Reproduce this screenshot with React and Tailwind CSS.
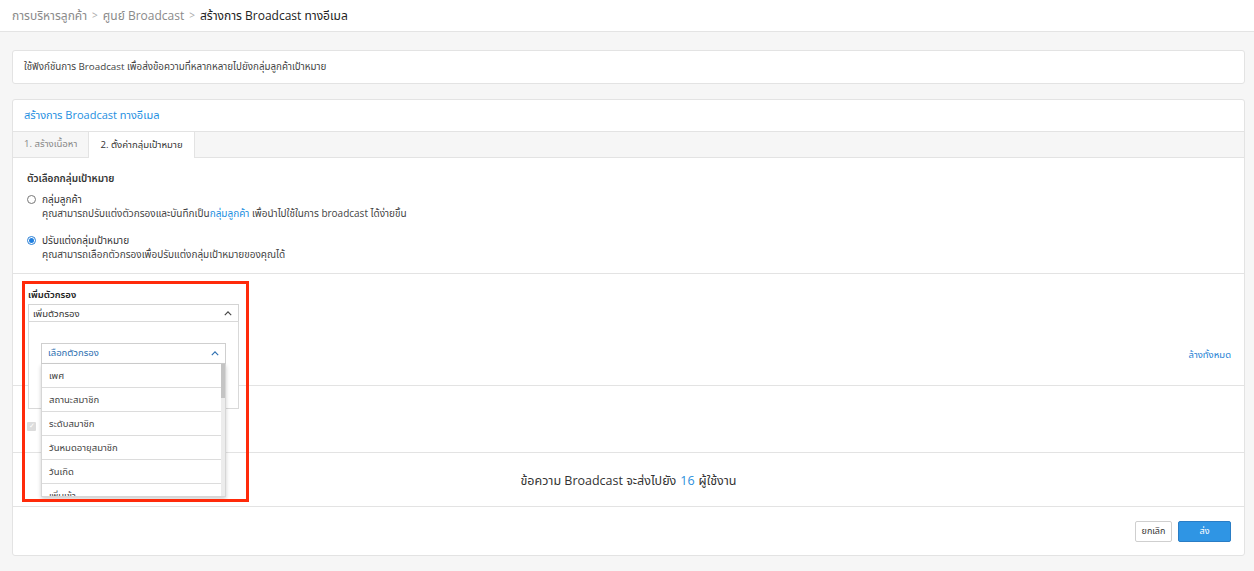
import React from 'react';

const FONT = { fontFamily: '"Open Sans", "Noto Sans", "Noto Sans Thai", "Liberation Sans", sans-serif' };

const ChevronUp = ({ className }) => (
  <svg viewBox="0 0 10 6" className={className} fill="none" stroke="currentColor" strokeWidth="1.4">
    <path d="M1 5l4-4 4 4" />
  </svg>
);

const filterItems = ['เพศ', 'สถานะสมาชิก', 'ระดับสมาชิก', 'วันหมดอายุสมาชิก', 'วันเกิด', 'เพิ่มเข้า'];

const Radio = ({ checked }) => (
  <span
    className={`mt-[3px] flex h-[9px] w-[9px] shrink-0 items-center justify-center rounded-full border ${
      checked ? 'border-[#2a7fd4]' : 'border-[#777]'
    } bg-white`}
  >
    {checked && <span className="h-[5px] w-[5px] rounded-full bg-[#1f7fe0]" />}
  </span>
);

const FilterDropdown = () => (
  <div className="absolute left-[15px] top-[47px] h-[88px] w-[211px] border border-[#d9d9d9] bg-white">
    <div className="absolute left-[12px] top-[21px] w-[185px]">
      <div className="flex h-[21px] items-center justify-between border border-[#cfcfcf] bg-white pl-[6px] pr-[6px] text-[9.5px] text-[#2d6fb0]">
        <span>เลือกตัวกรอง</span>
        <ChevronUp className="h-[5px] w-[8px] text-[#2d6fb0]" />
      </div>
      <div className="relative h-[133px] overflow-hidden border border-t-0 border-[#d6d6d6] bg-white shadow-[0_2px_4px_rgba(0,0,0,0.2)]">
        <div className="absolute right-0 top-0 h-full w-[4px] bg-[#ececec]">
          <div className="h-[34px] w-full bg-[#c4c4c4]" />
        </div>
        {filterItems.map((item) => (
          <div key={item} className="mr-[4px] flex h-[24px] items-center border-b border-[#dcdcdc] pl-[7px] pt-[2px] text-[9.5px] text-[#444]">
            {item}
          </div>
        ))}
      </div>
    </div>
  </div>
);

export default function App() {
  return (
    <div className="min-h-[571px] bg-[#f6f6f6] pb-[16px] text-[#333]" style={FONT}>
      <div className="flex h-[32px] items-center border-b border-[#e4e4e4] bg-white px-[12px] text-[12px]">
        <span className="text-[#8a8a8a]">การบริหารลูกค้า</span>
        <span className="mx-[5px] text-[10px] text-[#aaa]">&gt;</span>
        <span className="text-[#8a8a8a]">ศูนย์ Broadcast</span>
        <span className="mx-[5px] text-[10px] text-[#aaa]">&gt;</span>
        <span className="text-[#222]">สร้างการ Broadcast ทางอีเมล</span>
      </div>

      <div className="ml-[12px] mr-[9px] mt-[18px] flex h-[34px] items-center rounded-[3px] border border-[#e3e3e3] bg-white px-[11px] text-[9.8px] text-[#444]">
        ใช้ฟังก์ชันการ Broadcast เพื่อส่งข้อความที่หลากหลายไปยังกลุ่มลูกค้าเป้าหมาย
      </div>

      <div className="ml-[12px] mr-[9px] mt-[15px] rounded-[3px] border border-[#e3e3e3] bg-white">
        <div className="flex h-[31px] items-center px-[11px] pb-[1px] text-[11px] text-[#1e8fe1]">
          สร้างการ Broadcast ทางอีเมล
        </div>
        <div className="flex h-[27px] border-y border-[#e3e3e3] bg-[#f6f6f6] text-[9.6px]">
          <div className="flex items-center px-[11px] text-[#888]">1. สร้างเนื้อหา</div>
          <div className="-mb-px flex items-center border-x border-[#e3e3e3] bg-white px-[11px] text-[#333]">
            2. ตั้งค่ากลุ่มเป้าหมาย
          </div>
        </div>

        <div className="border-b border-[#e3e3e3] px-[14px] pb-[12px] pt-[13px] text-[10px]">
          <div className="font-semibold text-[#333]">ตัวเลือกกลุ่มเป้าหมาย</div>
          <div className="mt-[6px] flex gap-[6px]">
            <Radio />
            <div className="leading-[14px]">
              <div className="text-[#333]">กลุ่มลูกค้า</div>
              <div className="text-[#444]">
                คุณสามารถปรับแต่งตัวกรองและบันทึกเป็น<span className="text-[#1e8fe1]">กลุ่มลูกค้า</span> เพื่อนำไปใช้ในการ broadcast ได้ง่ายขึ้น
              </div>
            </div>
          </div>
          <div className="mt-[13px] flex gap-[6px]">
            <Radio checked />
            <div className="leading-[14px]">
              <div className="text-[#333]">ปรับแต่งกลุ่มเป้าหมาย</div>
              <div className="text-[#444]">คุณสามารถเลือกตัวกรองเพื่อปรับแต่งกลุ่มเป้าหมายของคุณได้</div>
            </div>
          </div>
        </div>

        <div className="relative z-10 h-[112px] border-b border-[#e3e3e3] px-[15px] pt-[14px] text-[9.5px]">
          <div className="font-semibold text-[#222]">เพิ่มตัวกรอง</div>
          <div className="mt-[2px] flex h-[19px] w-[211px] items-center justify-between border border-[#d4d4d4] bg-white pl-[4px] pr-[6px] text-[#333]">
            <span>เพิ่มตัวกรอง</span>
            <ChevronUp className="h-[5px] w-[8px] text-[#444]" />
          </div>
          <div className="absolute right-[13px] top-[74px] text-[#1e7fd4]">ล้างทั้งหมด</div>
          <FilterDropdown />
          <div className="pointer-events-none absolute left-[9px] top-[7px] h-[221px] w-[227px] border-[3px] border-[#ff2a0a]" />
        </div>

        <div className="flex h-[67px] items-center border-b border-[#e3e3e3] px-[14px]">
          <span className="mt-[14px] flex h-[9px] w-[9px] items-center justify-center rounded-[1px] bg-[#dcdcdc] text-[7px] text-white">
            ✓
          </span>
        </div>

        <div className="flex h-[54px] items-center justify-center border-b border-[#e3e3e3] pt-[3px] text-[12.5px] text-[#333]">
          ข้อความ Broadcast จะส่งไปยัง<span className="mx-[4px] text-[#2b8fdc]">16</span>ผู้ใช้งาน
        </div>

        <div className="flex h-[48px] items-center justify-end gap-[6px] pr-[13px] text-[9px]">
          <button className="h-[21px] w-[37px] rounded-[2px] border border-[#cfcfcf] bg-white text-[#333]">ยกเลิก</button>
          <button className="h-[21px] w-[53px] rounded-[2px] border border-[#2a7dc5] bg-[#2f95e4] text-white">ส่ง</button>
        </div>
      </div>
    </div>
  );
}
